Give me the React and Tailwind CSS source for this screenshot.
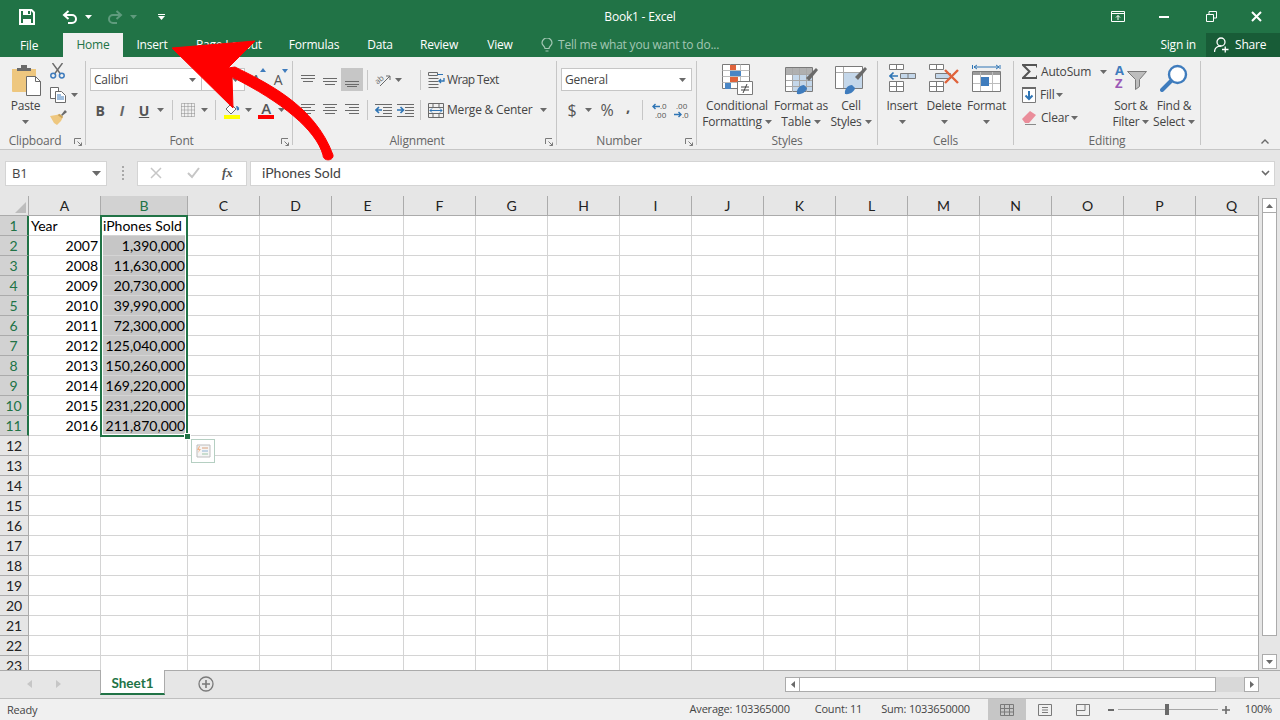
import React from "react";

const cols = ["A", "B", "C", "D", "E", "F", "G", "H", "I", "J", "K", "L", "M", "N", "O", "P", "Q"];
const data = [
  ["Year", "iPhones Sold"],
  ["2007", "1,390,000"],
  ["2008", "11,630,000"],
  ["2009", "20,730,000"],
  ["2010", "39,990,000"],
  ["2011", "72,300,000"],
  ["2012", "125,040,000"],
  ["2013", "150,260,000"],
  ["2014", "169,220,000"],
  ["2015", "231,220,000"],
  ["2016", "211,870,000"],
];
const rows = Array.from({ length: 23 }, (_, i) => i + 1);

const Caret = ({ color = "#6a6a6a" }) => (
  <svg width="7" height="4" viewBox="0 0 7 4" className="shrink-0">
    <path d="M0 0h7L3.500 4z" fill={color} />
  </svg>
);

const Launcher = () => (
  <svg width="8" height="8" viewBox="0 0 8 8" className="absolute right-[3px] top-[5px]">
    <path d="M.5 6V.5H7M7.500 7.500L3.500 3.500M7.500 4.500v3h-3" fill="none" stroke="#7a7a7a" />
  </svg>
);

const Sep = () => <div className="w-px h-[84px] mt-[4px] bg-[#c6c6c6] shrink-0" />;
const MiniSep = () => <div className="w-px h-[20px] bg-[#c6c6c6] shrink-0" />;

const GroupLabel = ({ text, launcher }) => (
  <div className={`relative h-[16px] leading-[16px] text-center text-[#666] ${launcher ? "pr-[15px]" : ""}`}>
    {text}
    {launcher && <Launcher />}
  </div>
);

const BigButton = ({ icon, lines, className, caret = true }) => (
  <div className={`flex flex-col items-center pt-[7px] shrink-0 ${className}`}>
    <div className="h-[34px] flex items-start justify-center">{icon}</div>
    <div className="h-4 leading-4 whitespace-nowrap">{lines[0]}</div>
    <div className="h-4 leading-4 whitespace-nowrap flex items-center gap-[3px]">
      {lines[1]}
      {caret && <Caret />}
    </div>
  </div>
);

const Lines = ({ rows, w = 16, h = 14 }) => (
  <svg width={w} height={h} viewBox={`0 0 ${w} ${h}`}>
    {rows.map(([x1, x2, y]) => (
      <path key={y} d={`M${x1} ${y + 0.5}H${x2}`} stroke="#6a6a6a" />
    ))}
  </svg>
);

/* ribbon + title bar icons */
const SaveIcon = () => (
  <svg width="16" height="16" viewBox="0 0 16 16">
    <path d="M1 1h11.500L15 3.500V15H1z" fill="none" stroke="#fff" strokeWidth="2" />
    <path d="M4 1h8v5H4zM4 10h8v5H4z" fill="#fff" />
    <path d="M9 2h2v3H9z" fill="#217346" />
  </svg>
);
const UndoIcon = ({ color = "#fff" }) => (
  <svg width="16" height="14" viewBox="0 0 16 14">
    <path d="M6.500 1L2 5l4.500 4M2.500 5H10a4 4 0 0 1 0 8H6" fill="none" stroke={color} strokeWidth="2" />
  </svg>
);
const PasteIcon = () => (
  <svg width="30" height="32" viewBox="0 0 30 32">
    <path d="M0 5h24v22a1 1 0 0 1-1 1H1a1 1 0 0 1-1-1z" fill="#eec77f" />
    <path d="M5 4h4V1h6v3h4v3H5z" fill="#6a6a6a" />
    <path d="M14.500 12.500h9l5 5v14h-14z" fill="#fff" stroke="#6a6a6a" />
    <path d="M23.500 12.500v5h5" fill="none" stroke="#6a6a6a" />
  </svg>
);
const CutIcon = () => (
  <svg width="15" height="16" viewBox="0 0 15 16">
    <path d="M2.500 0l8 11M12.500 0l-8 11" stroke="#6a6a6a" strokeWidth="1.400" />
    <circle cx="3.200" cy="12.600" r="2.400" fill="none" stroke="#3f7cbd" strokeWidth="1.500" />
    <circle cx="11.800" cy="12.600" r="2.400" fill="none" stroke="#3f7cbd" strokeWidth="1.500" />
  </svg>
);
const CopyIcon = () => (
  <svg width="16" height="16" viewBox="0 0 16 16">
    <path d="M.5.5h8v11h-8z" fill="#fff" stroke="#6a6a6a" />
    <path d="M5.500 4.500h6l4 4v7h-10z" fill="#fff" stroke="#6a6a6a" />
    <path d="M7 8h4M7 10h7M7 12h7" stroke="#3f7cbd" />
  </svg>
);
const BrushIcon = () => (
  <svg width="17" height="15" viewBox="0 0 17 15">
    <path d="M11 5l4-5 2 2-5 4z" fill="#6a6a6a" />
    <path d="M0 6l6-1 4-1 3 3-2 4-4 4-3-2z" fill="#eec77f" />
    <path d="M8.500 4.500l4 3" stroke="#c9a35c" strokeWidth="2" />
  </svg>
);
const GrowA = ({ up, size }) => (
  <span className="relative flex items-center justify-center w-[20px] text-[#555]" style={{ fontSize: size }}>
    A
    <svg width="6" height="4" viewBox="0 0 6 4" className="absolute right-0 top-0">
      <path d={up ? "M0 4h6L3 0z" : "M0 0h6L3 4z"} fill="#3f7cbd" />
    </svg>
  </span>
);
const BordersIcon = () => (
  <svg width="14" height="14" viewBox="0 0 14 14">
    <path d="M.5.5h13v13H.5zM7 .5v13M.5 7h13M3.500.5v13M10.500.5v13M.5 3.500h13M.5 10.500h13" fill="none" stroke="#8a8a8a" strokeDasharray="1 1" />
  </svg>
);
const FillIcon = () => (
  <svg width="17" height="17" viewBox="0 0 17 17">
    <path d="M2 7l5-5 5 5-5 5z" fill="#fff" stroke="#6a6a6a" />
    <path d="M12 4a3 3 0 0 1 3 4l-2 .5z" fill="#3f7cbd" />
    <path d="M0 13h16v4H0z" fill="#ffff00" />
  </svg>
);
const FontColorIcon = () => (
  <div className="flex flex-col items-center w-[16px]">
    <span className="text-[15px] leading-[15px] text-[#555] font-semibold">A</span>
    <div className="w-[16px] h-[4px] bg-[#f00] -mt-[1px]" />
  </div>
);
const OrientIcon = () => (
  <svg width="17" height="15" viewBox="0 0 17 15" className="overflow-visible">
    <text x="0" y="10" fontSize="8" fill="#6a6a6a" transform="rotate(-40 5 8)">ab</text>
    <path d="M5 14L15 4M15 4h-4M15 4v4" fill="none" stroke="#6a6a6a" />
  </svg>
);
const IndentIcon = ({ flip }) => (
  <svg width="17" height="14" viewBox="0 0 17 14">
    <path d="M0 1.500h17M8 4.500h9M8 7.500h9M8 10.500h9M0 13.500h17" stroke="#6a6a6a" />
    <path d={flip ? "M6 7H0M3.500 4L6.500 7l-3 3" : "M7 7H1M4 4L1 7l3 3"} fill="none" stroke="#2f75b5" strokeWidth="1.600" />
  </svg>
);
const WrapIcon = () => (
  <svg width="17" height="16" viewBox="0 0 17 16">
    <path d="M.5.5h9v3h-9zM.5 6.500h10M.5 9.500h10M.5 12.500h10M.5 15.500h10" fill="none" stroke="#6a6a6a" />
    <path d="M9.500 2.500H15" stroke="#2f75b5" />
    <path d="M16 6v3h-5M13 7l-2 2 2 2" fill="none" stroke="#2f75b5" strokeWidth="1.300" />
  </svg>
);
const MergeIcon = () => (
  <svg width="16" height="15" viewBox="0 0 16 15">
    <path d="M.5.5h15v14H.5zM.5 4.500h15M.5 10.500h15M5 .5v4M11 .5v4M5 10.500v4M11 10.500v4" fill="none" stroke="#6a6a6a" />
    <path d="M2 7.500h12M4 5.500l-2 2 2 2M12 5.500l2 2-2 2" fill="none" stroke="#2f75b5" />
  </svg>
);
const DecIcon = ({ more }) => (
  <svg width="17" height="17" viewBox="0 0 17 17" className="overflow-visible">
    {more ? (
      <>
        <text x="3" y="7" fontSize="8" letterSpacing="0" fill="#555">.00</text>
        <text x="9" y="16" fontSize="8" letterSpacing="0" fill="#555">.0</text>
        <path d="M1 12.500h7M5.500 10l2.500 2.500L5.500 15" fill="none" stroke="#2f75b5" strokeWidth="1.400" />
      </>
    ) : (
      <>
        <text x="8" y="7" fontSize="8" letterSpacing="0" fill="#555">.0</text>
        <text x="3" y="16" fontSize="8" letterSpacing="0" fill="#555">.00</text>
        <path d="M1 4.500h7M3.500 2L1 4.500 3.500 7" fill="none" stroke="#2f75b5" strokeWidth="1.400" />
      </>
    )}
  </svg>
);
const CondIcon = () => (
  <svg width="31" height="31" viewBox="0 0 31 31">
    <path d="M.5.5h27v24H.5z" fill="#fff" stroke="#7a7a7a" />
    <path d="M.5 6.500h27M.5 12.500h27M.5 18.500h27M8.500.5v24M18.500.5v24" stroke="#bdbdbd" />
    <path d="M8 1h6v5H8zM8 13h8v5H8z" fill="#e0633b" />
    <path d="M8 7h11v5H8zM3 19h6v6H3z" fill="#4a86c5" />
    <path d="M15.500 17.500h15v13h-15z" fill="#fff" stroke="#7a7a7a" />
    <path d="M19 23h8M19 26h8M25 20l-4 9" stroke="#444" />
  </svg>
);
const TableIcon = () => (
  <svg width="33" height="31" viewBox="0 0 33 31">
    <path d="M.5 3.500h27v24H.5z" fill="#fff" stroke="#7a7a7a" />
    <path d="M1 4h26v6H1z" fill="#b0b0b0" />
    <path d="M7 10h20v17H7z" fill="#c4d7ea" />
    <path d="M7.500 4v24M14.500 4v24M21.500 4v24M1 10.500h26M1 16.500h26M1 22.500h26" stroke="#a8a8a8" />
    <path d="M21 14L31 4l2 2-9 11z" fill="#6a6a6a" />
    <path d="M12 30c-1-5 3-9 7-9l3 3c0 3-5 7-10 6z" fill="#3f7cbd" />
  </svg>
);
const CellStyleIcon = () => (
  <svg width="32" height="31" viewBox="0 0 32 31">
    <path d="M.5 2.500h27v22H.5z" fill="#fff" stroke="#7a7a7a" />
    <path d="M9 9h18v15H9z" fill="#c4d7ea" />
    <path d="M8.500 3v21M1 8.500h26" stroke="#a8a8a8" />
    <path d="M20 13L30 3l2 2-9 11z" fill="#6a6a6a" />
    <path d="M10 30c-1-5 3-9 7-9l3 3c0 3-5 7-10 6z" fill="#3f7cbd" />
  </svg>
);
const InsertCellIcon = () => (
  <svg width="27" height="28" viewBox="0 0 27 28">
    <path d="M.5.5h14v5H.5zM7.500.5v5M.5 17.500h14v10H.5zM7.500 17.500v10M.5 22.500h14" fill="#fff" stroke="#7a7a7a" />
    <path d="M11.500 9.500h15v5h-15zM19 9.500v5" fill="#c4d7ea" stroke="#7a7a7a" />
    <path d="M9 12H1M4.500 8.500L1 12l3.500 3.500" fill="none" stroke="#2f75b5" strokeWidth="1.600" />
  </svg>
);
const DeleteCellIcon = () => (
  <svg width="31" height="28" viewBox="0 0 31 28">
    <path d="M.5.5h14v5H.5zM7.500.5v5M.5 17.500h14v10H.5zM7.500 17.500v10M.5 22.500h14" fill="#fff" stroke="#7a7a7a" />
    <path d="M6.500 9.500h15v5h-15z" fill="#c4d7ea" stroke="#7a7a7a" />
    <path d="M16 6l13 13M29 6L16 19" stroke="#e0633b" strokeWidth="2.400" />
  </svg>
);
const FormatCellIcon = () => (
  <svg width="29" height="31" viewBox="0 0 29 31">
    <path d="M.5 1v4M28 1v4M2 3h25M5 1L2 3l3 2M24 1l3 2-3 2" fill="none" stroke="#2f75b5" />
    <path d="M.5 7.500h28v20H.5z" fill="#fff" stroke="#7a7a7a" />
    <path d="M1 8h27v3H1z" fill="#9a9a9a" />
    <path d="M8.500 8v19M20.500 8v19M1 19.500h27" stroke="#bdbdbd" />
    <path d="M9 13h8v9H9z" fill="#3f7cbd" />
  </svg>
);
const SigmaIcon = () => (
  <svg width="15" height="15" viewBox="0 0 15 15">
    <path d="M15 3.500V1H1l6.500 6.500L1 14h14v-2.500" fill="none" stroke="#555" strokeWidth="2" />
  </svg>
);
const FillDownIcon = () => (
  <svg width="14" height="16" viewBox="0 0 14 16">
    <path d="M.5.5h13v15H.5z" fill="#fff" stroke="#7a7a7a" />
    <path d="M0 0h14v2H0z" fill="#6a6a6a" />
    <path d="M7 4v8M3.500 8.500L7 12l3.500-3.500" fill="none" stroke="#2f75b5" strokeWidth="2" />
  </svg>
);
const EraserIcon = () => (
  <svg width="15" height="14" viewBox="0 0 15 14">
    <path d="M0 8l8-8 6 4-7 8H3z" fill="#ea8d9a" />
    <path d="M3 13.500h11" stroke="#8a8a8a" />
  </svg>
);
const SortIcon = () => (
  <div className="w-[32px] h-[28px] flex">
    <div className="w-[12px] flex flex-col font-bold text-[13px] leading-[13px] tracking-normal">
      <span className="text-[#3f7cbd]">A</span>
      <span className="text-[#9b59b6]">Z</span>
    </div>
    <svg width="20" height="20" viewBox="0 0 20 20" className="mt-[7px]">
      <path d="M.5.5h19l-7 8v7l-4 3V8.500z" fill="#bdbdbd" stroke="#7a7a7a" />
    </svg>
  </div>
);
const FindIcon = () => (
  <svg width="28" height="28" viewBox="0 0 28 28">
    <circle cx="17.500" cy="10.500" r="8.500" fill="#fff" stroke="#3f7cbd" strokeWidth="2.400" />
    <path d="M11 17L2 26" stroke="#3f7cbd" strokeWidth="4" strokeLinecap="round" />
  </svg>
);

const UndoIconFlipped = () => (
  <div className="-scale-x-100"><UndoIcon color="#5f9b7d" /></div>
);

function TitleBar() {
  return (
    <div className="h-[33px] bg-[#217346] flex items-center text-white shrink-0">
      <div className="w-[400px] flex items-center pl-[19px]">
        <SaveIcon />
        <div className="ml-[27px]"><UndoIcon /></div>
        <div className="ml-[7px]"><Caret color="#fff" /></div>
        <div className="ml-[15px]"><UndoIconFlipped /></div>
        <div className="ml-[7px]"><Caret color="#5f9b7d" /></div>
        <div className="ml-[21px] flex flex-col items-center gap-[1px] w-[7px]">
          <div className="w-[7px] h-px bg-white" />
          <Caret color="#fff" />
        </div>
      </div>
      <div className="flex-1 text-center text-[12px]">Book1 - Excel</div>
      <div className="w-[400px] flex items-center justify-end">
        <svg width="14" height="11" viewBox="0 0 14 11" className="mr-[34px]">
          <path d="M.5.5h13v10H.5zM.5 2.500h13M7 9V4.500M5 6.500l2-2 2 2" fill="none" stroke="#fff" />
        </svg>
        <div className="w-[10px] h-[2px] bg-white mr-[37px]" />
        <svg width="11" height="11" viewBox="0 0 11 11" className="mr-[34px]">
          <path d="M.5 3.500h7v7h-7zM3 3V.5h7.500V7H8" fill="none" stroke="#fff" />
        </svg>
        <svg width="11" height="11" viewBox="0 0 11 11" className="mr-[18px]">
          <path d="M1 1l9 9M10 1l-9 9" stroke="#fff" strokeWidth="2" />
        </svg>
      </div>
    </div>
  );
}

function Tabs() {
  const tabs = [
    ["Insert", "w-[58px]"],
    ["Page Layout", "w-[96px]"],
    ["Formulas", "w-[74px]"],
    ["Data", "w-[58px]"],
    ["Review", "w-[60px]"],
    ["View", "w-[62px]"],
  ];
  return (
    <div className="h-[24px] bg-[#217346] flex items-stretch text-white text-[12px] shrink-0">
      <div className="w-[63px] pl-[20px] leading-[25px]">File</div>
      <div className="w-[60px] bg-[#f0f0f0] text-[#217346] text-center leading-[24px]">Home</div>
      {tabs.map(([t, w]) => (
        <div key={t} className={`${w} text-center leading-[24px]`}>{t}</div>
      ))}
      <div className="flex items-center ml-[10px] text-[#a3c7b4]">
        <svg width="12" height="15" viewBox="0 0 12 15" className="mr-[5px]">
          <path d="M4 10.500C4 8 1 7.500 1 5a5 5 0 0 1 10 0c0 2.500-3 3-3 5.500zM4.500 13h3" fill="none" stroke="#a3c7b4" strokeWidth="1.200" />
        </svg>
        Tell me what you want to do...
      </div>
      <div className="ml-auto leading-[24px] mr-[10px]">Sign in</div>
      <div className="w-[74px] bg-[#185c37] flex items-center pl-[8px]">
        <svg width="15" height="16" viewBox="0 0 15 16" className="mr-[6px]">
          <circle cx="7" cy="5" r="4" fill="none" stroke="#fff" strokeWidth="1.300" />
          <path d="M.5 15c0-4 3-6 6.500-6M8 12.500h6.500M11.250 9.500v6" fill="none" stroke="#fff" strokeWidth="1.300" />
        </svg>
        Share
      </div>
    </div>
  );
}

function Ribbon() {
  return (
    <div className="h-[93px] bg-[#f0f0f0] border-b border-[#c6c6c6] flex text-[12px] text-[#444] shrink-0 relative">
      {/* Clipboard */}
      <div className="w-[85px] flex flex-col shrink-0">
        <div className="h-[76px] flex">
          <div className="w-[49px] flex flex-col items-center pt-[7px] pl-[2px] shrink-0">
            <div className="h-[34px] pl-[3px]"><PasteIcon /></div>
            <div className="h-4 leading-4">Paste</div>
            <div className="h-4 flex items-center"><Caret /></div>
          </div>
          <div className="flex flex-col pt-[6px] pl-[1px]">
            <div className="h-[23px]"><CutIcon /></div>
            <div className="h-[24px] flex items-start pt-[1px] gap-[5px]"><CopyIcon /><div className="mt-[6px]"><Caret /></div></div>
            <BrushIcon />
          </div>
        </div>
        <GroupLabel text="Clipboard" launcher />
      </div>
      <Sep />
      {/* Font */}
      <div className="w-[206px] flex flex-col shrink-0">
        <div className="h-[76px] pl-[4px] pt-[11px]">
          <div className="flex h-[23px]">
            <div className="w-[112px] bg-white border border-[#c6c6c6] flex items-center justify-between pl-[3px] pr-[5px]">
              <span>Calibri</span>
              <Caret />
            </div>
            <div className="w-[43px] bg-white border border-l-0 border-[#c6c6c6] flex items-center justify-end pr-[5px]"><Caret /></div>
            <div className="ml-[1px] flex items-center">
              <GrowA up size="15px" />
              <div className="ml-[2px]"><GrowA size="14px" /></div>
            </div>
          </div>
          <div className="flex items-center h-[20px] mt-[9px] text-[#555]">
            <div className="w-[20px] text-center font-bold text-[14px]">B</div>
            <div className="w-[24px] text-center italic font-bold text-[14px] text-[#666]">I</div>
            <div className="w-[20px] text-center underline font-bold text-[14px]">U</div>
            <div className="ml-[3px] w-[15px]"><Caret /></div>
            <MiniSep />
            <div className="ml-[8px] mr-[6px]"><BordersIcon /></div>
            <Caret />
            <div className="ml-[7px] mr-[8px]"><MiniSep /></div>
            <FillIcon />
            <div className="ml-[4px] mr-[6px]"><Caret /></div>
            <FontColorIcon />
            <div className="ml-[4px]"><Caret /></div>
          </div>
        </div>
        <GroupLabel text="Font" launcher />
      </div>
      <Sep />
      {/* Alignment */}
      <div className="w-[263px] flex flex-col shrink-0">
        <div className="h-[76px] pl-[8px] pt-[11px]">
          <div className="flex items-center h-[23px]">
            <div className="w-[16px] mr-[6px]"><Lines rows={[[0, 14, 2], [0, 14, 5], [2, 12, 8]]} /></div>
            <div className="w-[16px] mr-[2px]"><Lines rows={[[0, 14, 5], [0, 14, 8], [2, 12, 11]]} /></div>
            <div className="w-[22px] h-[23px] bg-[#c6c6c6] flex items-center justify-center"><Lines rows={[[1, 15, 8], [1, 15, 11], [3, 13, 13]]} /></div>
            <div className="ml-[4px] mr-[7px]"><MiniSep /></div>
            <OrientIcon />
            <div className="ml-[3px] mr-[18px]"><Caret /></div>
            <MiniSep />
            <div className="ml-[7px] mr-[2px]"><WrapIcon /></div>
            <span className="tracking-[-0.6px]">Wrap Text</span>
          </div>
          <div className="flex items-center h-[20px] mt-[9px]">
            <div className="w-[16px] mr-[6px]"><Lines rows={[[0, 14, 1], [0, 10, 4], [0, 14, 7], [0, 10, 10]]} /></div>
            <div className="w-[16px] mr-[6px]"><Lines rows={[[0, 14, 1], [2, 12, 4], [0, 14, 7], [2, 12, 10]]} /></div>
            <div className="w-[16px] mr-[6px]"><Lines rows={[[0, 14, 1], [4, 14, 4], [0, 14, 7], [4, 14, 10]]} /></div>
            <MiniSep />
            <div className="ml-[7px] mr-[5px]"><IndentIcon /></div>
            <IndentIcon flip />
            <div className="ml-[6px]"><MiniSep /></div>
            <div className="ml-[7px] mr-[3px]"><MergeIcon /></div>
            <span>Merge &amp; Center</span>
            <div className="ml-[8px]"><Caret /></div>
          </div>
        </div>
        <GroupLabel text="Alignment" launcher />
      </div>
      <Sep />
      {/* Number */}
      <div className="w-[139px] flex flex-col shrink-0">
        <div className="h-[76px] pl-[4px] pt-[11px]">
          <div className="w-[131px] h-[23px] bg-white border border-[#c6c6c6] flex items-center justify-between pl-[3px] pr-[5px]">
            <span>General</span>
            <Caret />
          </div>
          <div className="flex items-center h-[20px] mt-[9px] text-[#555]">
            <div className="w-[22px] text-center text-[16px]">$</div>
            <div className="ml-[2px] mr-[4px]"><Caret /></div>
            <div className="w-[22px] text-center text-[16px]">%</div>
            <div className="w-[20px] text-center text-[15px] font-bold pb-[7px]">,</div>
            <div className="ml-[4px]"><MiniSep /></div>
            <div className="ml-[9px] mr-[4px]"><DecIcon /></div>
            <DecIcon more />
          </div>
        </div>
        <GroupLabel text="Number" launcher />
      </div>
      <Sep />
      {/* Styles */}
      <div className="w-[180px] flex flex-col shrink-0">
        <div className="h-[76px] flex pl-[4px]">
          <BigButton className="w-[72px]" icon={<CondIcon />} lines={["Conditional", "Formatting"]} />
          <BigButton className="w-[56px]" icon={<TableIcon />} lines={["Format as", "Table"]} />
          <BigButton className="w-[44px]" icon={<CellStyleIcon />} lines={["Cell", "Styles"]} />
        </div>
        <GroupLabel text="Styles" />
      </div>
      <Sep />
      {/* Cells */}
      <div className="w-[135px] flex flex-col shrink-0">
        <div className="h-[76px] flex pl-[3px]">
          <BigButton className="w-[42px]" icon={<InsertCellIcon />} lines={["Insert", ""]} />
          <BigButton className="w-[42px]" icon={<DeleteCellIcon />} lines={["Delete", ""]} />
          <BigButton className="w-[43px]" icon={<FormatCellIcon />} lines={["Format", ""]} />
        </div>
        <GroupLabel text="Cells" />
      </div>
      <Sep />
      {/* Editing */}
      <div className="w-[186px] flex flex-col shrink-0">
        <div className="h-[76px] flex">
          <div className="w-[95px] pl-[8px] pt-[3px] shrink-0">
            <div className="h-[23px] flex items-center">
              <SigmaIcon />
              <span className="ml-[4px] mr-[9px]">AutoSum</span>
              <Caret />
            </div>
            <div className="h-[23px] flex items-center">
              <FillDownIcon />
              <span className="ml-[4px] mr-[2px]">Fill</span>
              <Caret />
            </div>
            <div className="h-[23px] flex items-center">
              <EraserIcon />
              <span className="ml-[4px] mr-[2px]">Clear</span>
              <Caret />
            </div>
          </div>
          <BigButton className="w-[44px]" icon={<SortIcon />} lines={["Sort &", "Filter"]} />
          <BigButton className="w-[42px]" icon={<FindIcon />} lines={["Find &", "Select"]} />
        </div>
        <GroupLabel text="Editing" />
      </div>
      <Sep />
      <div className="flex-1 flex justify-end items-end pb-[5px] pr-[11px]">
        <svg width="8" height="5" viewBox="0 0 8 5">
          <path d="M.5 4.500L4 1l3.500 3.500" fill="none" stroke="#6a6a6a" strokeWidth="1.400" />
        </svg>
      </div>
    </div>
  );
}

function FormulaBar() {
  return (
    <div className="h-[46px] bg-[#e6e6e6] flex items-center shrink-0 pl-[5px] pr-[5px]">
      <div className="w-[102px] h-[25px] bg-white border border-[#d4d4d4] flex items-center justify-between pl-[6px] pr-[5px] text-[13px] text-[#444]">
        <span className="pt-px">B1</span>
        <svg width="9" height="5" viewBox="0 0 9 5"><path d="M0 0h9L4.500 5z" fill="#6a6a6a" /></svg>
      </div>
      <div className="ml-[15px] flex flex-col gap-[2px]">
        <div className="w-[2px] h-[2px] bg-[#a8a8a8]" />
        <div className="w-[2px] h-[2px] bg-[#a8a8a8]" />
        <div className="w-[2px] h-[2px] bg-[#a8a8a8]" />
        <div className="w-[2px] h-[2px] bg-[#a8a8a8]" />
      </div>
      <div className="ml-[13px] w-[110px] h-[25px] bg-white border border-[#d4d4d4] flex items-center pl-[12px]">
        <svg width="12" height="12" viewBox="0 0 12 12"><path d="M1 1l10 10M11 1L1 11" stroke="#c6c6c6" strokeWidth="1.500" /></svg>
        <svg width="13" height="12" viewBox="0 0 13 12" className="ml-[25px]"><path d="M1 6l4 4 7-9" fill="none" stroke="#c6c6c6" strokeWidth="2" /></svg>
        <span className="ml-[22px] text-[13px] italic font-bold text-[#555] font-['Liberation_Serif',serif]">fx</span>
      </div>
      <div className="ml-[3px] flex-1 h-[25px] bg-white border border-[#d4d4d4] flex items-center justify-between pl-[11px] pr-[4px] font-[Lato,sans-serif] tracking-normal text-[14px] text-[#444]">
        <span className="pb-px">iPhones Sold</span>
        <svg width="9" height="6" viewBox="0 0 9 6"><path d="M1 1l3.500 3.500L8 1" fill="none" stroke="#6a6a6a" strokeWidth="1.600" /></svg>
      </div>
    </div>
  );
}

function Sheet() {
  return (
    <div className="relative w-[1259px] h-[474px] overflow-hidden bg-white border-r border-[#ababab] font-[Lato,sans-serif] tracking-normal text-[14px] text-black shrink-0">
      <div className="grid grid-cols-[29px_72px_87px_repeat(15,72px)] auto-rows-[20px] w-[1310px]">
        <div className="bg-[#e6e6e6] border-r border-b border-[#ababab] flex items-end justify-end p-[2px]">
          <svg width="11" height="11" viewBox="0 0 11 11"><path d="M11 0v11H0z" fill="#bdbdbd" /></svg>
        </div>
        {cols.map((c) => (
          <div
            key={c}
            className={
              c === "B"
                ? "bg-[#d2d2d2] border-r border-b border-[#ababab] text-center leading-[20px] text-[#217346]"
                : "bg-[#e6e6e6] border-r border-b border-[#ababab] text-center leading-[20px] text-[#222]"
            }
          >
            {c}
          </div>
        ))}
        {rows.map((r) => (
          <React.Fragment key={r}>
            <div
              className={
                r <= 11
                  ? "bg-[#d2d2d2] border-r-2 border-r-[#217346] border-b border-b-[#ababab] text-center leading-[20px] text-[#217346]"
                  : "bg-[#e6e6e6] border-r border-r-[#ababab] border-b border-b-[#ababab] text-center leading-[20px] text-[#222]"
              }
            >
              {r}
            </div>
            {cols.map((c, i) => {
              const row = data[r - 1];
              const value = row && i < 2 ? row[i] : "";
              const isText = r === 1;
              const selected = c === "B" && r >= 2 && r <= 11;
              return (
                <div
                  key={c}
                  className={`${selected ? "bg-[#c6c6c6]" : "bg-white"} border-r border-b border-[#d4d4d4] leading-[20px] whitespace-nowrap overflow-hidden px-[2px] ${isText ? "text-left" : "text-right"}`}
                >
                  {value}
                </div>
              );
            })}
          </React.Fragment>
        ))}
      </div>
      {/* selection outline */}
      <div className="absolute left-[100px] top-[19px] w-[88px] h-[222px] border-2 border-[#217346] shadow-[inset_0_0_0_1px_#fff]" />
      <div className="absolute left-[185px] top-[238px] w-[5px] h-[5px] bg-[#217346] outline outline-1 outline-white" />
      {/* quick analysis */}
      <div className="absolute left-[191px] top-[243px] w-[24px] h-[24px] bg-white border border-[#b5cfc2] flex items-center justify-center">
        <svg width="15" height="14" viewBox="0 0 15 14">
          <path d="M1 1h13v12H1z" fill="#f5f5f5" stroke="#bdbdbd" />
          <path d="M6 4h6" stroke="#d9a07a" /><path d="M6 7h6" stroke="#8fb4d6" /><path d="M6 10h6" stroke="#9cc5a8" />
          <path d="M3 2L1 6h2l-1 3 3-4H3l1-3z" fill="#f0b48c" />
        </svg>
      </div>
    </div>
  );
}

function VScroll() {
  return (
    <div className="w-[21px] h-[474px] bg-[#e6e6e6] pl-[3px] pt-[2px] shrink-0 flex flex-col">
      <div className="w-[15px] h-[15px] bg-white border border-[#ababab] flex items-center justify-center">
        <svg width="7" height="4" viewBox="0 0 7 4"><path d="M0 4h7L3.500 0z" fill="#6a6a6a" /></svg>
      </div>
      <div className="w-[15px] h-[423px] bg-white border-x border-b border-[#ababab]" />
      <div className="flex-1" />
      <div className="w-[15px] h-[15px] mb-[1px] bg-white border border-[#ababab] flex items-center justify-center">
        <Caret />
      </div>
    </div>
  );
}

function SheetTabs() {
  return (
    <div className="h-[28px] bg-[#e6e6e6] border-t border-[#ababab] flex items-start shrink-0 relative">
      <div className="w-[100px] h-[26px] flex items-center pl-[27px] gap-[24px]">
        <svg width="5" height="8" viewBox="0 0 5 8"><path d="M5 0v8L0 4z" fill="#c6c6c6" /></svg>
        <svg width="5" height="8" viewBox="0 0 5 8"><path d="M0 0v8l5-4z" fill="#c6c6c6" /></svg>
      </div>
      <div className="w-[65px] h-[25px] -mt-px bg-white border-x border-[#ababab] border-b-2 border-b-[#217346] text-center text-[13.500px] tracking-normal font-bold text-[#217346] leading-[26px] font-[Lato,sans-serif]">
        Sheet1
      </div>
      <div className="ml-[33px] mt-[5px]">
        <svg width="16" height="16" viewBox="0 0 16 16">
          <circle cx="8" cy="8" r="7" fill="none" stroke="#7a7a7a" strokeWidth="1.300" />
          <path d="M8 4v8M4 8h8" stroke="#7a7a7a" strokeWidth="1.600" />
        </svg>
      </div>
      <div className="ml-auto mr-[21px] mt-[6px] w-[474px] h-[15px] flex">
        <div className="w-[15px] h-[15px] bg-white border border-[#ababab] flex items-center justify-center">
          <svg width="4" height="7" viewBox="0 0 4 7"><path d="M4 0v7L0 3.500z" fill="#6a6a6a" /></svg>
        </div>
        <div className="w-[416px] bg-white border-y border-r border-[#ababab]" />
        <div className="flex-1 bg-[#d8d8d8]" />
        <div className="w-[15px] h-[15px] bg-white border border-[#ababab] flex items-center justify-center">
          <svg width="4" height="7" viewBox="0 0 4 7"><path d="M0 0v7l4-3.500z" fill="#6a6a6a" /></svg>
        </div>
      </div>
    </div>
  );
}

function StatusBar() {
  return (
    <div className="h-[22px] bg-[#f0f0f0] border-t border-[#bfbfbf] flex items-stretch text-[11px] text-[#444] shrink-0">
      <div className="pl-[7px] leading-[21px]">Ready</div>
      <div className="ml-auto flex items-center">
        <span>Average: 103365000</span>
        <span className="ml-[25px]">Count: 11</span>
        <span className="ml-[19px]">Sum: 1033650000</span>
        <div className="ml-[18px] w-[38px] h-[21px] bg-[#c6c6c6] flex items-center justify-center">
          <svg width="14" height="12" viewBox="0 0 14 12"><path d="M.5.5h13v11H.5zM4.500.5v11M9.500.5v11M.5 4.500h13M.5 8h13" fill="none" stroke="#7a7a7a" /></svg>
        </div>
        <div className="w-[38px] flex justify-center">
          <svg width="14" height="12" viewBox="0 0 14 12"><path d="M.5.5h13v11H.5zM4 3.500h6M4 6h6M4 8.500h6" fill="none" stroke="#7a7a7a" /></svg>
        </div>
        <div className="w-[38px] flex justify-center">
          <svg width="14" height="12" viewBox="0 0 14 12"><path d="M.5.5h13v11H.5zM.5 6.500h8.500V.5" fill="none" stroke="#7a7a7a" /></svg>
        </div>
        <div className="ml-[6px] w-[6px] h-[2px] bg-[#6a6a6a]" />
        <div className="ml-[4px] w-[100px] h-px bg-[#a8a8a8] relative">
          <div className="absolute left-[47px] -top-[5px] w-[4px] h-[11px] bg-[#6a6a6a]" />
        </div>
        <svg width="8" height="8" viewBox="0 0 8 8" className="ml-[4px]"><path d="M0 4h8M4 0v8" stroke="#6a6a6a" strokeWidth="1.600" /></svg>
        <span className="ml-[15px] mr-[8px]">100%</span>
      </div>
    </div>
  );
}

export default function App() {
  return (
    <div className="relative w-[1280px] h-[720px] overflow-hidden flex flex-col bg-[#e6e6e6] font-['Open_Sans',sans-serif] tracking-[-0.2px]">
      <TitleBar />
      <Tabs />
      <Ribbon />
      <FormulaBar />
      <div className="flex">
        <Sheet />
        <VScroll />
      </div>
      <SheetTabs />
      <StatusBar />
      {/* red annotation arrow */}
      <svg width="1280" height="720" viewBox="0 0 1280 720" className="absolute left-0 top-0 pointer-events-none">
        <path
          d="M172 48L255 41L228 68L235 67C265 82 315 105 333 155C334 161 323 162 323 155C316 130 282 102 232 77L233 108Z"
          fill="#ff0000"
          stroke="#ff0000"
          strokeLinejoin="round"
        />
      </svg>
    </div>
  );
}
